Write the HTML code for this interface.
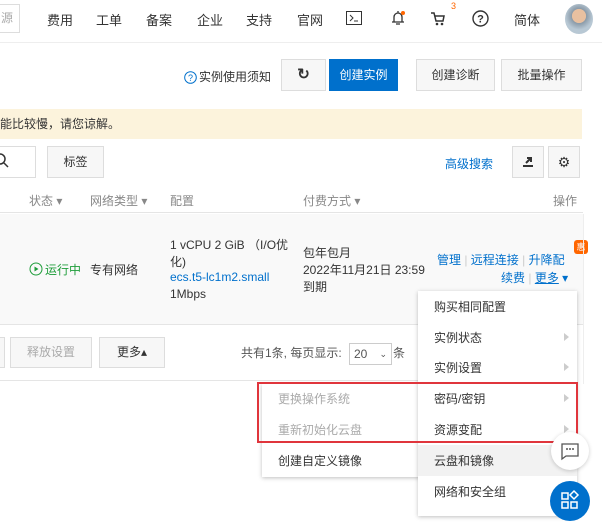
<!DOCTYPE html><html><head><meta charset="utf-8"><style>
*{margin:0;padding:0;box-sizing:border-box}
body{width:602px;height:512px;overflow:hidden;background:#fff;font-family:"Liberation Sans","Noto Sans CJK SC",sans-serif;font-size:12px;color:#333;position:relative}
.a{position:absolute;white-space:nowrap}
.btn{position:absolute;border:1px solid #ddd;background:#f7f7f7;text-align:center;color:#333}
.blue{color:#0070cc}
.mi{position:absolute;left:16px;font-size:12px;color:#333}
.arr{position:absolute;right:8px;width:0;height:0;border-top:4px solid transparent;border-bottom:4px solid transparent;border-left:5px solid #ccc}
</style></head><body>
<div class="a" style="left:0;top:0;width:602px;height:43px;border-bottom:1px solid #eee;background:#fff"></div>
<div class="a" style="left:-2px;top:4px;width:22px;height:29px;border:1px solid #ddd;color:#aaa;font-size:12px;line-height:27px;padding-left:2px">源</div>
<div class="a" style="top:10px;left:47px;font-size:13px">费用</div>
<div class="a" style="top:10px;left:96px;font-size:13px">工单</div>
<div class="a" style="top:10px;left:146px;font-size:13px">备案</div>
<div class="a" style="top:10px;left:197px;font-size:13px">企业</div>
<div class="a" style="top:10px;left:246px;font-size:13px">支持</div>
<div class="a" style="top:10px;left:297px;font-size:13px">官网</div>
<svg class="a" style="left:346px;top:11px" width="16" height="14"><rect x="0.5" y="0.5" width="15" height="13" fill="none" stroke="#333"/><path d="M4 4l3 3-3 3M8 10h4" stroke="#333" fill="none"/></svg>
<svg class="a" style="left:390px;top:9px" width="16" height="18"><path d="M8 2v2M4 13V8a4 4 0 018 0v5M2 13h12M6 15h4" stroke="#333" fill="none" stroke-width="1.3"/><circle cx="13" cy="4" r="2" fill="#f60"/></svg>
<svg class="a" style="left:430px;top:11px" width="16" height="16"><path d="M1 2h3l2 8h7l1-5H5" stroke="#333" fill="none" stroke-width="1.5"/><circle cx="7" cy="13" r="1.3" fill="#333"/><circle cx="12" cy="13" r="1.3" fill="#333"/></svg>
<div class="a" style="left:451px;top:1px;color:#f60;font-size:9px">3</div>
<svg class="a" style="left:472px;top:10px" width="17" height="17"><circle cx="8.5" cy="8.5" r="7.5" fill="none" stroke="#333" stroke-width="1.4"/><text x="8.5" y="12.5" font-size="11" text-anchor="middle" font-family="Liberation Sans" font-weight="bold" fill="#333">?</text></svg>
<div class="a" style="top:10px;left:514px;font-size:13px">简体</div>
<div class="a" style="left:565px;top:4px;width:28px;height:30px;border-radius:50%;background:radial-gradient(circle at 50% 40%,#e8c0a0 0 30%,#8a9aa8 32%,#b8c8d4 60%)"></div>
<svg class="a" style="left:184px;top:71px" width="13" height="13"><circle cx="6.5" cy="6.5" r="5.8" fill="none" stroke="#0070cc"/><text x="6.5" y="10" font-size="9" text-anchor="middle" fill="#0070cc" font-family="Liberation Sans">?</text></svg>
<div class="a" style="left:199px;top:68px">实例使用须知</div>
<div class="btn" style="left:281px;top:59px;width:45px;height:32px;line-height:30px;font-size:15px;font-weight:bold">↻</div>
<div class="btn" style="left:329px;top:59px;width:69px;height:32px;line-height:30px;background:#0070cc;border-color:#0070cc;color:#fff">创建实例</div>
<div class="btn" style="left:416px;top:59px;width:79px;height:32px;line-height:30px">创建诊断</div>
<div class="btn" style="left:501px;top:59px;width:81px;height:32px;line-height:30px">批量操作</div>
<div class="a" style="left:0;top:109px;width:582px;height:30px;background:#fcf3dc;line-height:30px;padding-left:0">能比较慢，请您谅解。</div>
<div class="btn" style="left:-2px;top:146px;width:38px;height:32px;background:#fff"></div>
<svg class="a" style="left:-6px;top:153px" width="16" height="16"><circle cx="6" cy="6" r="5" fill="none" stroke="#333" stroke-width="1.5"/><path d="M10 10l4 4" stroke="#333" stroke-width="1.5"/></svg>
<div class="btn" style="left:47px;top:146px;width:57px;height:32px;line-height:30px">标签</div>
<div class="a blue" style="left:445px;top:155px">高级搜索</div>
<div class="btn" style="left:512px;top:146px;width:32px;height:32px"><svg width="30" height="30"><path d="M10 19h10M13 16l5-5M14 11h4v4" stroke="#333" stroke-width="2" fill="none"/></svg></div>
<div class="btn" style="left:548px;top:146px;width:32px;height:32px;line-height:30px;font-size:14px">⚙</div>
<div class="a" style="left:0;top:186px;width:583px;height:27px;border-bottom:1px solid #e5e5e5;color:#888;line-height:30px">
<span class="a" style="left:29px">状态 ▾</span><span class="a" style="left:90px">网络类型 ▾</span><span class="a" style="left:170px">配置</span><span class="a" style="left:303px">付费方式 ▾</span><span class="a" style="left:553px">操作</span></div>
<div class="a" style="left:0;top:214px;width:583px;height:111px;background:#f9f9f9;border-bottom:1px solid #e5e5e5"></div>
<svg class="a" style="left:29px;top:262px" width="14" height="14"><circle cx="7" cy="7" r="6" fill="none" stroke="#1e9d3a"/><path d="M5.5 4.5v5l4-2.5z" fill="#1e9d3a"/></svg>
<div class="a" style="left:45px;top:261px;color:#1e9d3a">运行中</div>
<div class="a" style="left:90px;top:261px">专有网络</div>
<div class="a" style="left:170px;top:236px">1 vCPU 2 GiB （I/O优</div>
<div class="a" style="left:170px;top:253px">化)</div>
<div class="a blue" style="left:170px;top:270px">ecs.t5-lc1m2.small</div>
<div class="a" style="left:170px;top:287px">1Mbps</div>
<div class="a" style="left:303px;top:244px">包年包月</div>
<div class="a" style="left:303px;top:261px">2022年11月21日 23:59</div>
<div class="a" style="left:303px;top:278px">到期</div>
<div class="a blue" style="left:437px;top:251px">管理 <span style="color:#ccc">|</span> 远程连接 <span style="color:#ccc">|</span> 升降配</div>
<div class="a blue" style="left:501px;top:269px">续费 <span style="color:#ccc">|</span> <u>更多</u> ▾</div>
<div class="a" style="left:574px;top:240px;width:14px;height:14px;background:#f60;color:#fff;font-size:9px;text-align:center;line-height:14px;border-radius:3px">惠</div>
<div class="btn" style="left:-2px;top:337px;width:7px;height:31px"></div>
<div class="btn" style="left:10px;top:337px;width:82px;height:31px;line-height:29px;color:#aaa">释放设置</div>
<div class="btn" style="left:99px;top:337px;width:66px;height:31px;line-height:29px">更多▴</div>
<div class="a" style="left:241px;top:344px;color:#555">共有1条, 每页显示:</div>
<div class="a" style="left:349px;top:343px;width:43px;height:22px;border:1px solid #ccc;background:#fff;line-height:20px;padding-left:4px;color:#555">20 <span style="position:absolute;right:4px;font-size:9px">⌄</span></div>
<div class="a" style="left:393px;top:344px;color:#555">条</div>
<div class="a" style="left:0;top:380px;width:418px;height:1px;background:#e5e5e5"></div>
<div class="a" style="left:583px;top:214px;width:1px;height:170px;background:#eee"></div>
<div class="a" style="left:262px;top:384px;width:158px;height:93px;background:#fff;box-shadow:0 1px 4px rgba(0,0,0,.25)">
<div class="mi" style="top:6px;color:#aaa">更换操作系统</div>
<div class="mi" style="top:37px;color:#aaa">重新初始化云盘</div>
<div class="mi" style="top:68px">创建自定义镜像</div></div>
<div class="a" style="left:418px;top:291px;width:159px;height:225px;background:#fff;box-shadow:0 1px 4px rgba(0,0,0,.25)">
<div class="mi" style="top:7px">购买相同配置</div>
<div class="mi" style="top:38px">实例状态</div><div class="arr" style="top:42px"></div>
<div class="mi" style="top:68px">实例设置</div><div class="arr" style="top:72px"></div>
<div class="mi" style="top:99px">密码/密钥</div><div class="arr" style="top:103px"></div>
<div class="mi" style="top:130px">资源变配</div><div class="arr" style="top:134px"></div>
<div style="position:absolute;left:0;top:154px;width:159px;height:31px;background:#f2f2f2"></div>
<div class="mi" style="top:161px">云盘和镜像</div>
<div class="mi" style="top:192px">网络和安全组</div></div>
<div class="a" style="left:257px;top:382px;width:321px;height:61px;border:2px solid #e0353c"></div>
<div class="a" style="left:551px;top:432px;width:38px;height:38px;border-radius:50%;background:#fff;box-shadow:0 1px 4px rgba(0,0,0,.2)"><svg width="38" height="38"><path d="M11 12h16v12H15l-4 3z" fill="none" stroke="#555" stroke-width="1.3"/><circle cx="16" cy="17" r="1" fill="#555"/><circle cx="19" cy="17" r="1" fill="#555"/><circle cx="22" cy="17" r="1" fill="#555"/></svg></div>
<div class="a" style="left:550px;top:481px;width:40px;height:40px;border-radius:50%;background:#0070cc"><svg width="40" height="40"><g fill="none" stroke="#fff" stroke-width="1.5"><rect x="12" y="12" width="6" height="6"/><rect x="12" y="21" width="6" height="6"/><rect x="21" y="21" width="6" height="6"/><path d="M24 10l4 4-4 4-4-4z"/></g></svg></div>
</body></html>
